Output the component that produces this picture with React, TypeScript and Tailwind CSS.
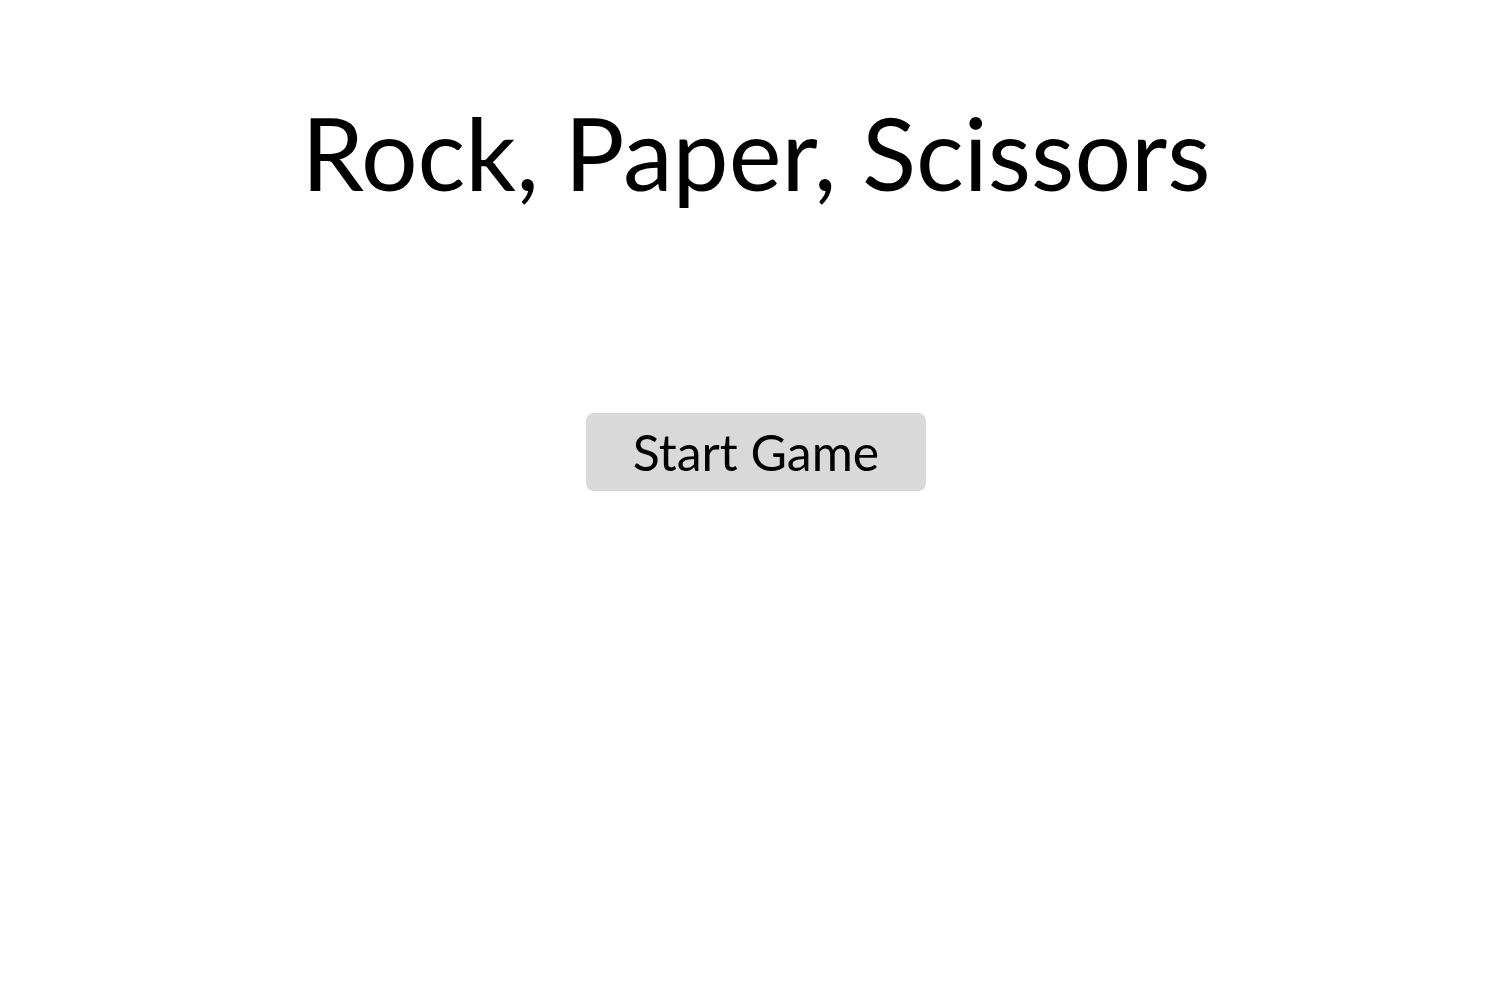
export default function App() {
  return (
    <div className="min-h-screen bg-white flex flex-col items-center font-['Lato',sans-serif] text-black">
      <h1 className="mt-[84px] text-[100px] leading-[136px] font-normal">Rock, Paper, Scissors</h1>
      <button className="mt-[193px] w-[340px] h-[78px] rounded-lg bg-[#d9d9d9] text-[50px] leading-none cursor-pointer">
        Start Game
      </button>
    </div>
  );
}
